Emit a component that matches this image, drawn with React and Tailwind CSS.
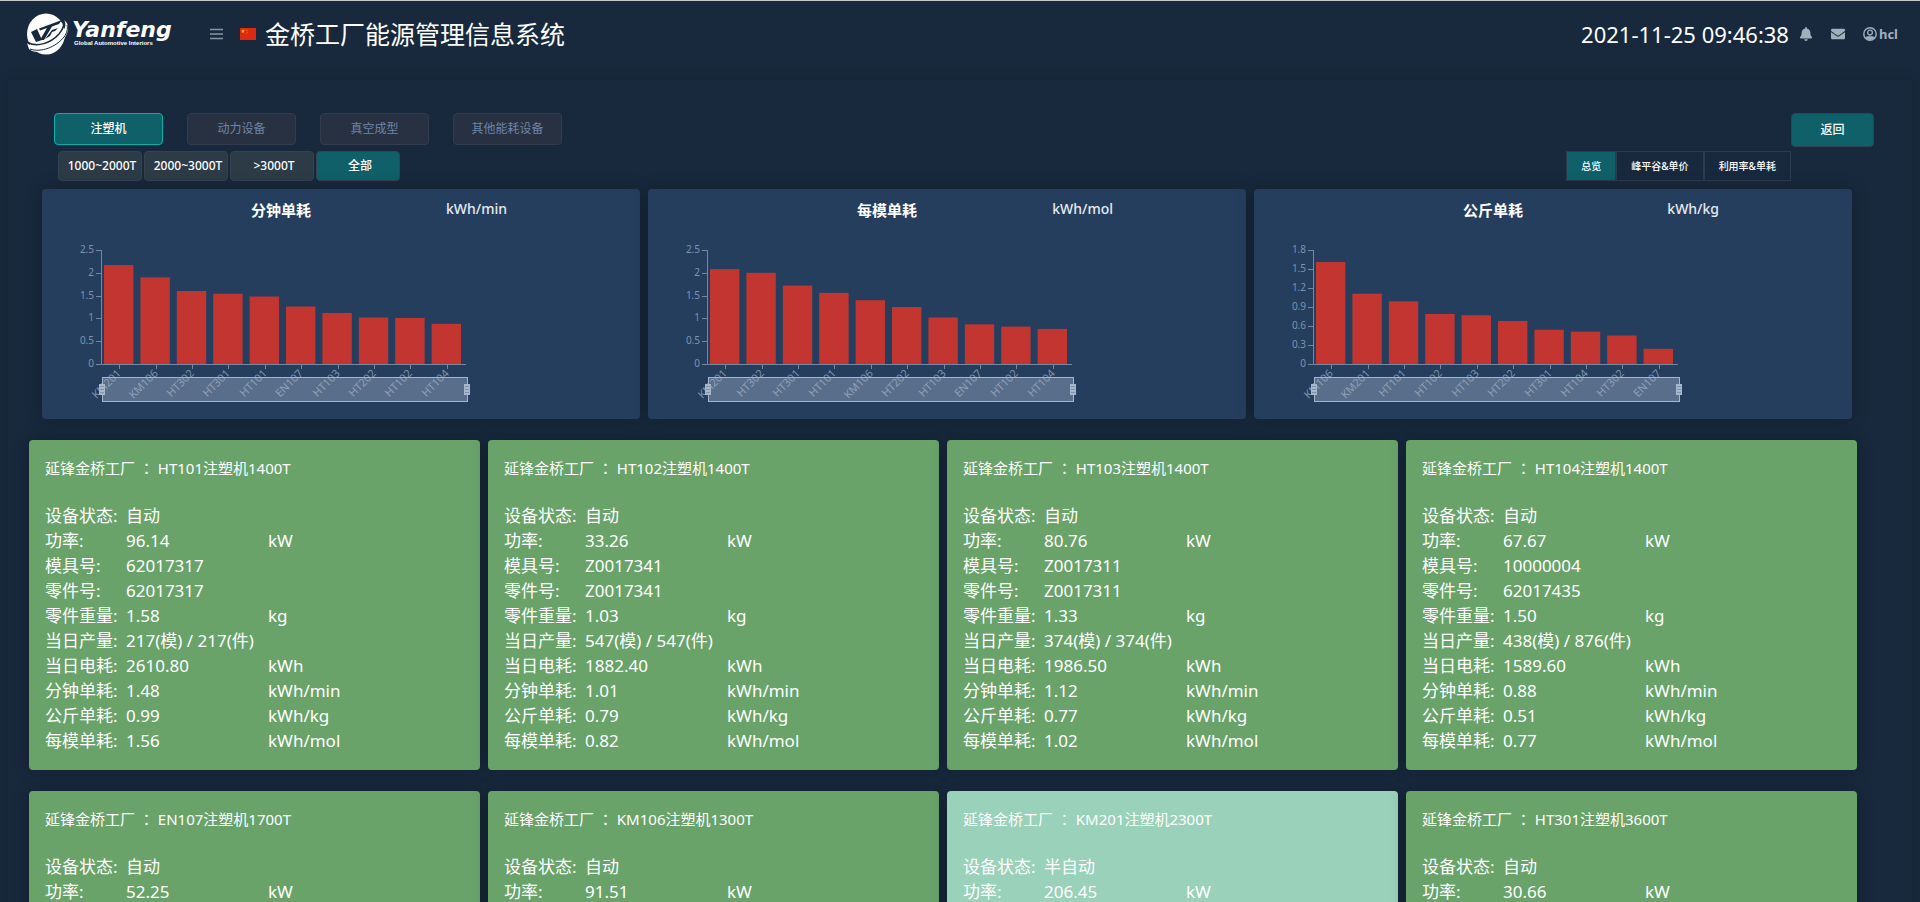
import { useState } from "react";
import { FaBell, FaEnvelope } from "react-icons/fa";

const DEVICE_TABS = ["注塑机", "动力设备", "真空成型", "其他能耗设备"];
const TONNAGES = ["1000~2000T", "2000~3000T", ">3000T", "全部"];
const VIEWS = ["总览", "峰平谷&单价", "利用率&单耗"];

const CHARTS = [
  {
    title: "分钟单耗",
    unit: "kWh/min",
    ticks: [0, 0.5, 1, 1.5, 2, 2.5],
    bars: [
      ["KM201", 2.17], ["KM106", 1.9], ["HT302", 1.6], ["HT301", 1.54], ["HT101", 1.48],
      ["EN107", 1.26], ["HT103", 1.12], ["HT202", 1.02], ["HT102", 1.01], ["HT104", 0.88],
    ],
  },
  {
    title: "每模单耗",
    unit: "kWh/mol",
    ticks: [0, 0.5, 1, 1.5, 2, 2.5],
    bars: [
      ["KM201", 2.08], ["HT302", 2.0], ["HT301", 1.72], ["HT101", 1.56], ["KM106", 1.4],
      ["HT202", 1.25], ["HT103", 1.02], ["EN107", 0.87], ["HT102", 0.82], ["HT104", 0.77],
    ],
  },
  {
    title: "公斤单耗",
    unit: "kWh/kg",
    ticks: [0, 0.3, 0.6, 0.9, 1.2, 1.5, 1.8],
    bars: [
      ["KM106", 1.61], ["KM201", 1.11], ["HT101", 0.99], ["HT102", 0.79], ["HT103", 0.77],
      ["HT202", 0.68], ["HT301", 0.54], ["HT104", 0.51], ["HT302", 0.45], ["EN107", 0.24],
    ],
  },
];

// label, key, unit
const FIELDS = [
  ["设备状态", "state", ""],
  ["功率", "power", "kW"],
  ["模具号", "mold", ""],
  ["零件号", "part", ""],
  ["零件重量", "weight", "kg"],
  ["当日产量", "output", ""],
  ["当日电耗", "energy", "kWh"],
  ["分钟单耗", "perMin", "kWh/min"],
  ["公斤单耗", "perKg", "kWh/kg"],
  ["每模单耗", "perMold", "kWh/mol"],
];

const MACHINES = [
  { name: "HT101注塑机1400T", state: "自动", power: "96.14", mold: "62017317", part: "62017317", weight: "1.58", output: "217(模) / 217(件)", energy: "2610.80", perMin: "1.48", perKg: "0.99", perMold: "1.56" },
  { name: "HT102注塑机1400T", state: "自动", power: "33.26", mold: "Z0017341", part: "Z0017341", weight: "1.03", output: "547(模) / 547(件)", energy: "1882.40", perMin: "1.01", perKg: "0.79", perMold: "0.82" },
  { name: "HT103注塑机1400T", state: "自动", power: "80.76", mold: "Z0017311", part: "Z0017311", weight: "1.33", output: "374(模) / 374(件)", energy: "1986.50", perMin: "1.12", perKg: "0.77", perMold: "1.02" },
  { name: "HT104注塑机1400T", state: "自动", power: "67.67", mold: "10000004", part: "62017435", weight: "1.50", output: "438(模) / 876(件)", energy: "1589.60", perMin: "0.88", perKg: "0.51", perMold: "0.77" },
  { name: "EN107注塑机1700T", state: "自动", power: "52.25", perMin: "1.26", perKg: "0.24", perMold: "0.87" },
  { name: "KM106注塑机1300T", state: "自动", power: "91.51", perMin: "1.90", perKg: "1.61", perMold: "1.40" },
  { name: "KM201注塑机2300T", state: "半自动", power: "206.45", perMin: "2.17", perKg: "1.11", perMold: "2.08" },
  { name: "HT301注塑机3600T", state: "自动", power: "30.66", perMin: "1.54", perKg: "0.54", perMold: "1.72" },
];

function Logo() {
  return (
    <svg width="150" height="44" viewBox="0 0 150 44" role="img" aria-label="Yanfeng">
      <ellipse cx="20" cy="22" rx="19" ry="20.500" fill="#fff" />
      {/* orbit ring */}
      <path d="M1 31 C8 38 24 35 34 24 C39 18 41 12 38 8 C44 12 43 20 38 27 C29 38 10 44 3 37 Z" fill="#fff" />
      <path d="M1 30 C11 36 25 31 33 22 C38 16 39 12 37 8" fill="none" stroke="#18293d" strokeWidth="1.500" />
      <path d="M4 37 C15 41 30 35 38 25 C41 21 42 17 41 13" fill="none" stroke="#18293d" strokeWidth="1" />
      {/* YF monogram */}
      <path d="M5 20 L11 17 L16 28 L10 30 Z" fill="#18293d" />
      <path d="M13 16.500 L36 8 L33 12 L26 14.500 L18 28 L14 28 L21 16 L14 18.500 Z" fill="#18293d" />
      <path d="M26 18 L32 16 L29 19 L26 20 L24 24 L19 27 Z" fill="#18293d" />
      <text x="46" y="25" fill="#fff" className="font-['DejaVu_Sans'] text-[22px] font-bold italic">Yanfeng</text>
      <text x="48" y="33" fill="#fff" className="font-['Liberation_Sans'] text-[6px] font-bold">Global Automotive Interiors</text>
    </svg>
  );
}

function Flag() {
  return (
    <svg width="16" height="12" viewBox="0 0 16 12" className="shrink-0">
      <rect width="16" height="12" fill="#de2910" />
      <path d="M3 1.200 L3.500 2.600 H5 L3.800 3.500 L4.200 4.900 L3 4 L1.800 4.900 L2.200 3.500 L1 2.600 H2.500 Z" fill="#ffde00" />
      <circle cx="6" cy="1.300" r=".5" fill="#e88a10" />
      <circle cx="7.200" cy="2.600" r=".5" fill="#e88a10" />
      <circle cx="7.200" cy="4.200" r=".5" fill="#e88a10" />
      <circle cx="6" cy="5.500" r=".5" fill="#e88a10" />
    </svg>
  );
}

function UserIcon() {
  return (
    <svg width="14" height="14" viewBox="0 0 14 14">
      <circle cx="7" cy="7" r="6.200" fill="none" stroke="#9fb0bd" strokeWidth="1.400" />
      <circle cx="7" cy="5.600" r="2.400" fill="none" stroke="#9fb0bd" strokeWidth="1.300" />
      <path d="M2.500 10.500 C4 8.800 5.200 9.300 7 9.300 C8.800 9.300 10 8.800 11.500 10.500 C9.500 13.800 4.500 13.800 2.500 10.500 Z" fill="#9fb0bd" />
    </svg>
  );
}

function Header() {
  return (
    <header className="flex h-[66px] items-center border-t border-[#c4c8c8] pl-[26px] pr-[22px]">
      <Logo />
      <button aria-label="menu" className="ml-[34px] mr-[17px]">
        <svg width="13" height="12" viewBox="0 0 13 12">
          <path d="M0 1.500H13M0 6H13M0 10.500H13" stroke="#8796a3" strokeWidth="1.500" />
        </svg>
      </button>
      <Flag />
      <h1 className="ml-[9px] text-[25px] leading-8 text-white">金桥工厂能源管理信息系统</h1>
      <div className="ml-auto flex items-center text-[#9fb0bd]">
        <time className="text-[22px] leading-8 text-white">2021-11-25 09:46:38</time>
        <button aria-label="notifications" className="ml-[10px]"><FaBell size={14} /></button>
        <button aria-label="messages" className="ml-[18px]"><FaEnvelope size={14} /></button>
        <a href="#user" className="ml-[18px] flex items-center gap-[2px] text-[13px] leading-4 font-bold">
          <UserIcon />
          hcl
        </a>
      </div>
    </header>
  );
}

function Handle({ x }) {
  return (
    <g>
      <rect x={x - 3} y="195" width="6" height="11" fill="#a7b7cc" />
      <path d={`M${x - 1} 197v7M${x + 1} 197v7`} stroke="#5b6f8b" strokeDasharray="1 2" />
    </g>
  );
}

function BarChart({ title, unit, ticks, bars }) {
  const left = 59;
  const base = 175;
  const plotW = 364;
  const plotH = 114;
  const max = ticks[ticks.length - 1];
  const band = plotW / bars.length;

  return (
    <section className="min-w-0 flex-1 overflow-hidden rounded bg-[#253e5e] shadow-[0_0_16px_rgba(0,0,0,0.25)]">
      <svg width="480" height="230">
        <text x="239" y="27" textAnchor="middle" fill="#fff" className="text-[15px] font-bold">{title}</text>
        <text x="465" y="25" textAnchor="end" fill="#e6eaef" className="text-[14px] font-medium">{unit}</text>

        {ticks.map(t => {
          const y = Math.round(base - (t / max) * plotH) + 0.5;
          return (
            <g key={t}>
              <path d={`M${left - 5} ${y}H${left}`} stroke="#7488a3" />
              <text x={left - 7} y={y + 2} textAnchor="end" fill="#7f92ac" className="text-[10px]">{t}</text>
            </g>
          );
        })}

        {bars.map(([name, value], i) => {
          const h = (value / max) * plotH;
          const cx = Math.round(left + band * (i + 0.5)) + 0.5;
          return (
            <g key={name}>
              <rect x={left + band * i + 3} y={base - h} width={band - 7} height={h} fill="#c23531" />
              <path d={`M${cx} ${base}v5`} stroke="#7488a3" />
              <text
                x={cx}
                y="186"
                textAnchor="end"
                fill="#7f92ac"
                transform={`rotate(-45 ${cx} 183)`}
                className="text-[11px]"
              >
                {name}
              </text>
            </g>
          );
        })}

        <path d={`M${left + 0.5} 61V${base + 0.5}H${left + plotW + 1}`} fill="none" stroke="#7488a3" />

        {/* data zoom slider */}
        <rect x="60.500" y="188.500" width="365" height="24" fill="#a7b7cc" fillOpacity=".4" stroke="#a9b6c8" />
        <Handle x={60} />
        <Handle x={425} />
      </svg>
    </section>
  );
}

function MachineCard({ machine }) {
  const bg = machine.state === "半自动" ? "bg-[#99d1ba]" : "bg-[#69a36a]";

  return (
    <article className={`${bg} rounded px-4 pt-4 pb-[17px] text-white shadow-[0_0_16px_rgba(0,0,0,0.25)]`}>
      <h2 className="mb-[22px] text-[15px] leading-[25px]">
        延锋金桥工厂 <span className="font-['Noto_Sans_CJK_TC'] leading-none">：</span> {machine.name}
      </h2>
      <dl className="text-[17px] leading-[25px]">
        {FIELDS.map(([label, key, unit]) => (
          <div key={key} className="flex whitespace-nowrap">
            <dt className="w-[81px]">{label}:</dt>
            <dd className="w-[142px]">{machine[key] ?? "-"}</dd>
            <dd>{unit}</dd>
          </div>
        ))}
      </dl>
    </article>
  );
}

export default function App() {
  const [device, setDevice] = useState("注塑机");
  const [tonnage, setTonnage] = useState("全部");
  const [view, setView] = useState("总览");

  return (
    <div className="h-screen overflow-x-hidden overflow-y-auto bg-[#18293d] font-['Noto_Sans','Noto_Sans_CJK_SC',sans-serif] [scrollbar-width:none]">
      <Header />

      <main className="mx-2 mt-[14px] pt-[33px] pb-5 shadow-[0_0_14px_rgba(0,0,0,0.15)]">
        {/* device type */}
        <div className="flex items-start pr-[38px] pl-[46px]">
          <nav className="flex gap-6">
            {DEVICE_TABS.map(d => (
              <button
                key={d}
                onClick={() => setDevice(d)}
                className={`h-8 w-[109px] rounded border text-[12px] leading-4 ${
                  d === device
                    ? "border-[#00b3a6] bg-[#0f6069] font-medium text-white"
                    : "border-[#333c4c] bg-[#283142] text-[#6f84a8]"
                }`}
              >
                {d}
              </button>
            ))}
          </nav>
          <button className="ml-auto h-[34px] w-[83px] rounded border border-[#2f4455] bg-[#0f6069] text-[12px] leading-4 font-medium text-white">
            返回
          </button>
        </div>

        {/* tonnage + view switch */}
        <div className="mt-1 flex justify-between pr-[121px] pl-[50px] font-medium text-white">
          <div className="flex gap-[2px]">
            {TONNAGES.map(t => (
              <button
                key={t}
                onClick={() => setTonnage(t)}
                className={`h-[30px] w-[84px] rounded border border-[#354252] pl-1 text-[12px] leading-4 whitespace-nowrap ${
                  t === tonnage ? "bg-[#0f6069]" : "bg-[#2d3b47]"
                }`}
              >
                {t}
              </button>
            ))}
          </div>
          <div className="flex">
            {VIEWS.map(v => (
              <button
                key={v}
                onClick={() => setView(v)}
                className={`h-[30px] border border-[#2e3b4d] px-[14px] text-[10px] leading-4 ${
                  v === view ? "bg-[#0f6069]" : ""
                }`}
              >
                {v}
              </button>
            ))}
          </div>
        </div>

        <div className="mt-2 flex gap-2 pr-[60px] pl-[34px]">
          {CHARTS.map(c => (
            <BarChart key={c.title} {...c} />
          ))}
        </div>

        <div className="mt-[21px] grid grid-cols-4 gap-x-2 gap-y-[21px] pr-[55px] pl-[21px]">
          {MACHINES.map(m => (
            <MachineCard key={m.name} machine={m} />
          ))}
        </div>
      </main>
    </div>
  );
}
